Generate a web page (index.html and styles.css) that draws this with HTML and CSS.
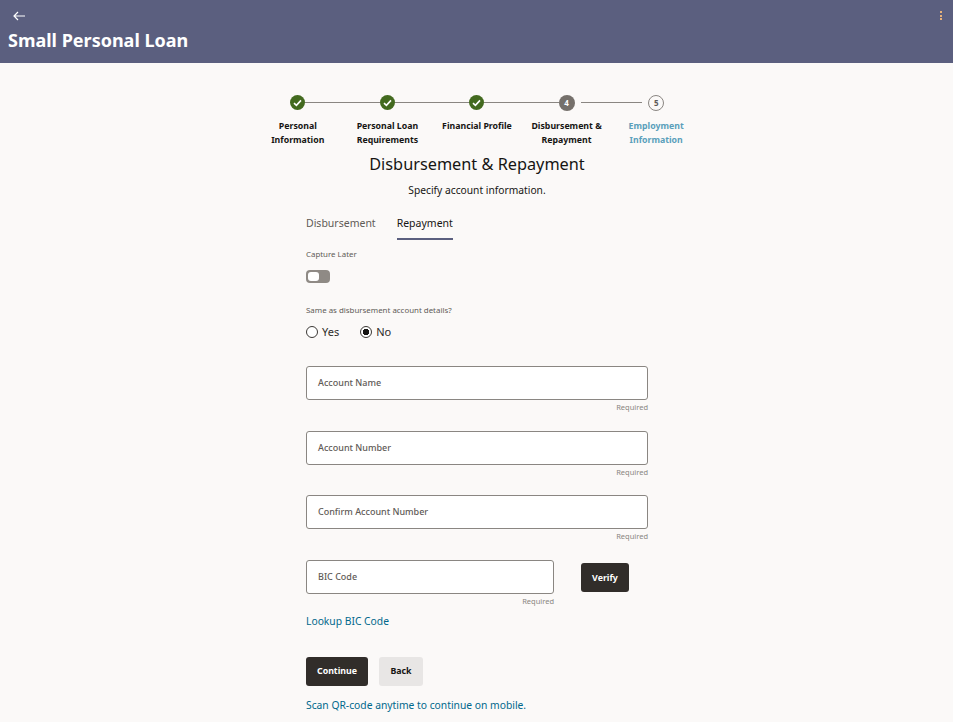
FILE: index.html
```html
<!DOCTYPE html>
<html>
<head>
  <meta charset="UTF-8">
  <title>Small Personal Loan</title>
  <link rel="stylesheet" href="styles.css">
</head>
<body>
  <header class="topbar">
    <div class="topbar-row">
      <svg class="back-icon" width="12" height="10" viewBox="0 0 12 10"><path d="M5 1 1 5l4 4M1 5h11" fill="none" stroke="#fff" stroke-width="1.2"/></svg>
      <div class="kebab"><span></span><span></span><span></span></div>
    </div>
    <h1>Small Personal Loan</h1>
  </header>

  <main class="page">
    <ol class="stepper">
      <li class="step done">
        <div class="step-track">
          <span class="step-dot"><svg width="9" height="8" viewBox="0 0 9 8"><path d="M1 4.2 3.4 6.4 8 1.4" fill="none" stroke="#fff" stroke-width="1.6"/></svg></span>
        </div>
        <div class="step-label">Personal Information</div>
      </li>
      <li class="step done">
        <div class="step-track">
          <span class="step-dot"><svg width="9" height="8" viewBox="0 0 9 8"><path d="M1 4.2 3.4 6.4 8 1.4" fill="none" stroke="#fff" stroke-width="1.6"/></svg></span>
        </div>
        <div class="step-label">Personal Loan Requirements</div>
      </li>
      <li class="step done">
        <div class="step-track">
          <span class="step-dot"><svg width="9" height="8" viewBox="0 0 9 8"><path d="M1 4.2 3.4 6.4 8 1.4" fill="none" stroke="#fff" stroke-width="1.6"/></svg></span>
        </div>
        <div class="step-label">Financial Profile</div>
      </li>
      <li class="step current">
        <div class="step-track"><span class="step-dot">4</span></div>
        <div class="step-label">Disbursement &amp; Repayment</div>
      </li>
      <li class="step todo">
        <div class="step-track"><span class="step-dot">5</span></div>
        <div class="step-label">Employment Information</div>
      </li>
    </ol>

    <h2>Disbursement &amp; Repayment</h2>
    <p class="subtitle">Specify account information.</p>

    <form class="form">
      <div class="tabs">
        <a class="tab">Disbursement</a>
        <a class="tab selected">Repayment</a>
      </div>

      <div class="small-label capture-label">Capture Later</div>
      <div class="switch"><span class="switch-knob"></span></div>

      <div class="small-label same-label">Same as disbursement account details?</div>
      <div class="radios">
        <label class="radio"><span class="radio-dot"></span>Yes</label>
        <label class="radio"><span class="radio-dot checked"></span>No</label>
      </div>

      <div class="field first">
        <div class="input">Account Name</div>
        <div class="hint">Required</div>
      </div>
      <div class="field">
        <div class="input">Account Number</div>
        <div class="hint">Required</div>
      </div>
      <div class="field">
        <div class="input">Confirm Account Number</div>
        <div class="hint">Required</div>
      </div>
      <div class="bic-row">
        <div class="field bic">
          <div class="input">BIC Code</div>
          <div class="hint">Required</div>
        </div>
        <button type="button" class="btn dark verify">Verify</button>
      </div>

      <a class="link lookup">Lookup BIC Code</a>

      <div class="actions">
        <button type="button" class="btn dark continue">Continue</button>
        <button type="button" class="btn light">Back</button>
      </div>

      <a class="link scan">Scan QR-code anytime to continue on mobile.</a>
    </form>
  </main>
</body>
</html>
```

FILE: styles.css
```css
* {
  box-sizing: border-box;
}
body {
  margin: 0;
  height: 722px;
  overflow: hidden;
  background-color: #fbf9f8;
  color: #161513;
  font-family: "Noto Sans", "Open Sans", sans-serif;
}
.topbar {
  height: 63px;
  background-color: #5b5f7f;
  color: #fff;
  padding: 11px 8px 0;
}
.topbar-row {
  display: flex;
  justify-content: space-between;
  align-items: flex-start;
  height: 14px;
  padding: 0 3px 0 5px;
}
.back-icon {
  display: block;
}
.kebab {
  display: flex;
  flex-direction: column;
  gap: 1.5px;
}
.kebab span {
  width: 2px;
  height: 2px;
  background-color: #e8b27a;
}
.topbar h1 {
  margin: 2px 0 0;
  font-size: 18px;
  line-height: 26px;
  font-weight: 700;
}

.page {
  width: 448px;
  margin: 0 0 0 253px;
  padding-top: 31px;
}
.stepper {
  display: flex;
  margin: 0;
  padding: 0;
  list-style: none;
}
.step {
  width: 89.6px;
  text-align: center;
}
.step-track {
  position: relative;
  height: 17px;
  display: flex;
  justify-content: center;
  align-items: center;
}
.step-track::after {
  content: "";
  position: absolute;
  left: 52px;
  width: 75px;
  top: 8px;
  height: 1px;
  background-color: #8a8682;
}
.step:last-child .step-track::after {
  display: none;
}
.current .step-track::after {
  left: 59px;
  width: 61px;
}
.step-dot {
  width: 15px;
  height: 15px;
  border-radius: 50%;
  display: flex;
  align-items: center;
  justify-content: center;
  font-size: 8px;
  font-weight: 700;
}
.done .step-dot {
  background-color: #436a1f;
}
.current .step-dot {
  width: 16px;
  height: 16px;
  background-color: #75706b;
  color: #fff;
}
.todo .step-dot {
  width: 16px;
  height: 16px;
  border: 1px solid #8a8682;
  color: #5f5b57;
}
.step-label {
  margin: 8px auto 0;
  width: 86px;
  font-size: 8.75px;
  line-height: 14px;
  font-weight: 700;
}
.todo .step-label {
  color: #5a9fbb;
}
h2 {
  margin: 4px 0 0;
  text-align: center;
  font-size: 16.3px;
  line-height: 26px;
  font-weight: 400;
}
.subtitle {
  margin: 5px 0 0;
  text-align: center;
  font-size: 10.25px;
  line-height: 16px;
}

.form {
  width: 342px;
  margin: 13px 0 0 53px;
}
.tabs {
  display: flex;
  gap: 21px;
  height: 29px;
}
.tab {
  font-size: 10.5px;
  line-height: 16px;
  padding-top: 4px;
  color: #5f5b57;
}
.tab.selected {
  color: #161513;
  border-bottom: 2px solid #5b5f7f;
}
.small-label {
  font-size: 7.9px;
  line-height: 12px;
  color: #5f5b57;
}
.capture-label {
  margin-top: 8px;
}
.switch {
  width: 24px;
  height: 13px;
  margin-top: 10px;
  border-radius: 4px;
  background-color: #8f8a85;
  padding: 2px;
}
.switch-knob {
  display: block;
  width: 11px;
  height: 9px;
  border-radius: 3px;
  background-color: #fff;
}
.same-label {
  margin-top: 21px;
}
.radios {
  display: flex;
  gap: 21px;
  margin-top: 8px;
}
.radio {
  display: flex;
  align-items: center;
  gap: 4px;
  font-size: 11px;
  line-height: 16px;
  color: #2f2c29;
}
.radio-dot {
  width: 12px;
  height: 12px;
  border-radius: 50%;
  border: 1px solid #3b3835;
  background-color: #fff;
}
.radio-dot.checked {
  background: radial-gradient(circle, #161513 3px, #fff 3.5px);
}
.field {
  margin-top: 16.67px;
}
.field.first {
  margin-top: 26px;
}
.input {
  height: 34px;
  border: 1px solid #8a8682;
  border-radius: 3px;
  background-color: #fff;
  padding: 0 11px;
  font-size: 9px;
  font-weight: 500;
  line-height: 32px;
  color: #5f5b57;
}
.hint {
  text-align: right;
  font-size: 7.5px;
  line-height: 14px;
  color: #8a8682;
}
.bic-row {
  display: flex;
  align-items: flex-start;
}
.bic {
  width: 248px;
}
.btn {
  border: none;
  border-radius: 3px;
  padding: 0;
  font-family: inherit;
  font-size: 8.8px;
  font-weight: 700;
}
.btn.dark {
  background-color: #312d2a;
  color: #fff;
}
.btn.light {
  width: 44px;
  background-color: #e8e6e5;
  color: #161513;
}
.verify {
  width: 48px;
  height: 29px;
  margin: 20px 0 0 27px;
}
.link {
  display: block;
  font-size: 10.3px;
  line-height: 16px;
  color: #00688c;
}
.lookup {
  margin-top: 5px;
}
.actions {
  display: flex;
  gap: 11px;
  margin-top: 28px;
}
.actions .btn {
  height: 29px;
}
.continue {
  width: 62px;
}
.scan {
  margin-top: 11px;
}
```
